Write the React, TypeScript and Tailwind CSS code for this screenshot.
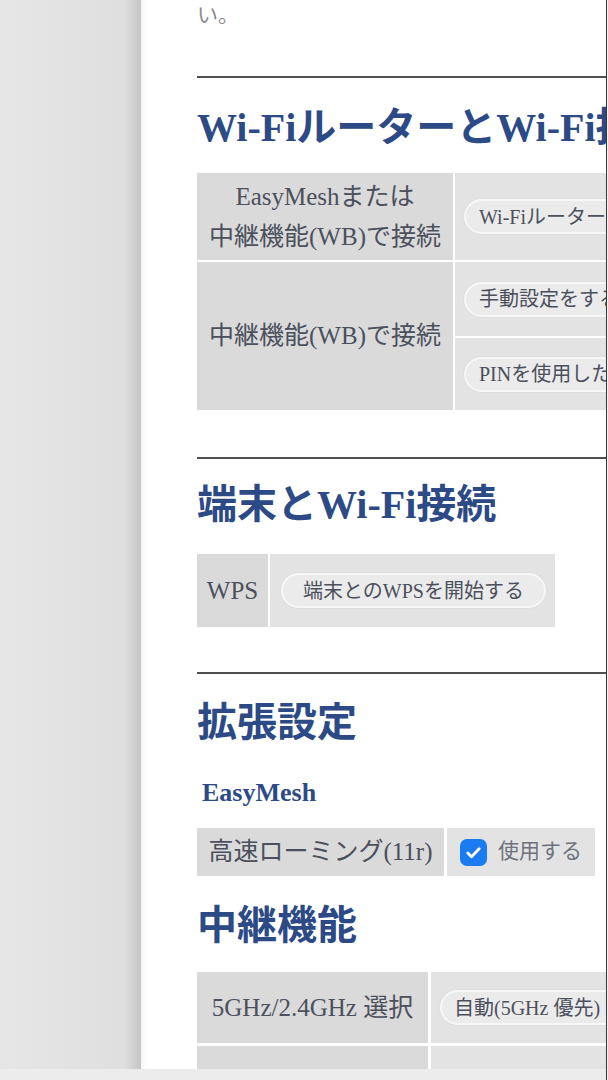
import React from 'react';

const serif = "font-['Liberation_Serif','Noto_Sans_CJK_JP',serif]";

const Pill: React.FC<{ label: string; className?: string }> = ({ label, className = '' }) => (
  <span
    className={`inline-flex items-center h-[35px] rounded-full border-2 border-[#f7f7f7] bg-[#ebebeb] shadow-[0_0_0_1px_#dedede] text-[20px] text-[#4b505c] whitespace-nowrap ${className}`}
  >
    {label}
  </span>
);

const Divider = ({ className = '' }: { className?: string }) => (
  <div className={`h-[2px] w-full bg-[#505050] ${className}`}></div>
);

const Heading = ({ children, className = '' }: { children: React.ReactNode; className?: string }) => (
  <h2 className={`text-[40px] leading-[44px] font-bold text-[#2c4a86] whitespace-nowrap ${className}`}>{children}</h2>
);

const App: React.FC = () => {
  return (
    <div className={`flex w-[608px] h-[1080px] overflow-hidden ${serif}`}>
      <div className="flex flex-col w-[606px]">
        <div className="flex h-[1069px]">
          {/* Side panel */}
          <div className="w-[141px] shrink-0 bg-[linear-gradient(to_right,#e6e6e6_0%,#dfdfdf_88%,#c5c5c5_100%)]"></div>

          {/* Page */}
          <div className="relative w-[465px] overflow-hidden bg-white shadow-[inset_8px_0_10px_-8px_rgba(0,0,0,0.08)]">
            <div className="w-[700px] pl-[56px]">
              <p className="text-[21px] leading-[30px] text-[#8a8a8a]">い。</p>

              {/* Wi-Fi router section */}
              <Divider className="mt-[46px]" />
              <Heading className="mt-[28px]">Wi-FiルーターとWi-Fi接続</Heading>

              <div className="mt-[23px] grid grid-cols-[256px_400px] grid-rows-[87px_74px_72px] gap-[2px] text-[25px] leading-[40px] text-[#4b505c]">
                <div className="flex flex-col items-center justify-center bg-[#dadada] text-center">
                  <span>EasyMeshまたは</span>
                  <span>中継機能(WB)で接続</span>
                </div>
                <div className="flex items-center bg-[#e3e3e3] pl-[9px]">
                  <Pill label="Wi-Fiルーターとの接続を開始する" className="px-[13px]" />
                </div>
                <div className="row-span-2 flex items-center justify-center bg-[#dadada] text-center">
                  中継機能(WB)で接続
                </div>
                <div className="flex items-center bg-[#e3e3e3] pl-[9px]">
                  <Pill label="手動設定をする" className="px-[13px]" />
                </div>
                <div className="flex items-center bg-[#e3e3e3] pl-[9px]">
                  <Pill label="PINを使用した接続を開始する" className="px-[13px]" />
                </div>
              </div>

              {/* Device section */}
              <Divider className="mt-[47px]" />
              <Heading className="mt-[24px]">端末とWi-Fi接続</Heading>

              <div className="mt-[27px] flex gap-[2px] h-[73px] text-[25px] text-[#4b505c]">
                <div className="flex w-[71px] items-center justify-center bg-[#dadada]">WPS</div>
                <div className="flex w-[285px] items-center bg-[#e3e3e3] pl-[11px]">
                  <Pill label="端末とのWPSを開始する" className="w-[265px] justify-center" />
                </div>
              </div>

              {/* Advanced */}
              <Divider className="mt-[45px]" />
              <Heading className="mt-[27px]">拡張設定</Heading>

              <h3 className="mt-[32px] pl-[5px] text-[26px] leading-[32px] font-bold text-[#2c4a86]">EasyMesh</h3>

              <div className="mt-[19px] flex gap-[3px] h-[48px] text-[25px] text-[#4b505c]">
                <div className="flex w-[247px] items-center justify-center bg-[#dadada] whitespace-nowrap">
                  高速ローミング(11r)
                </div>
                <div className="flex w-[148px] items-center gap-[11px] bg-[#e3e3e3] pl-[13px]">
                  <span className="flex h-[27px] w-[27px] items-center justify-center rounded-[7px] bg-[#1b7cf2]">
                    <svg width="19" height="19" viewBox="0 0 16 16" fill="none">
                      <path d="M3.2 8.4l3.1 3.1L12.8 4.8" stroke="white" strokeWidth="2.4" strokeLinecap="round" strokeLinejoin="round" />
                    </svg>
                  </span>
                  <span className="text-[21px] text-[#6e727c]">使用する</span>
                </div>
              </div>

              {/* Repeater */}
              <Heading className="mt-[28px]">中継機能</Heading>

              <div className="mt-[24px] grid grid-cols-[231px_300px] grid-rows-[71px_40px] gap-x-[3px] gap-y-[3px] text-[25px] text-[#4b505c]">
                <div className="flex items-center justify-center bg-[#dadada] whitespace-nowrap">
                  5GHz/2.4GHz 選択
                </div>
                <div className="flex items-center bg-[#e3e3e3] pl-[9px]">
                  <Pill label="自動(5GHz 優先)" className="px-[12px] pr-[40px]" />
                </div>
                <div className="bg-[#dadada]"></div>
                <div className="bg-[#e3e3e3]"></div>
              </div>
            </div>
          </div>
        </div>

        {/* Bottom bar */}
        <div className="h-[11px] bg-[#ececec]"></div>
      </div>

      <div className="w-[1px] h-full bg-[#353535]"></div>
      <div className="w-[1px] h-full bg-[#f3f3f3]"></div>
    </div>
  );
};

export default App;
